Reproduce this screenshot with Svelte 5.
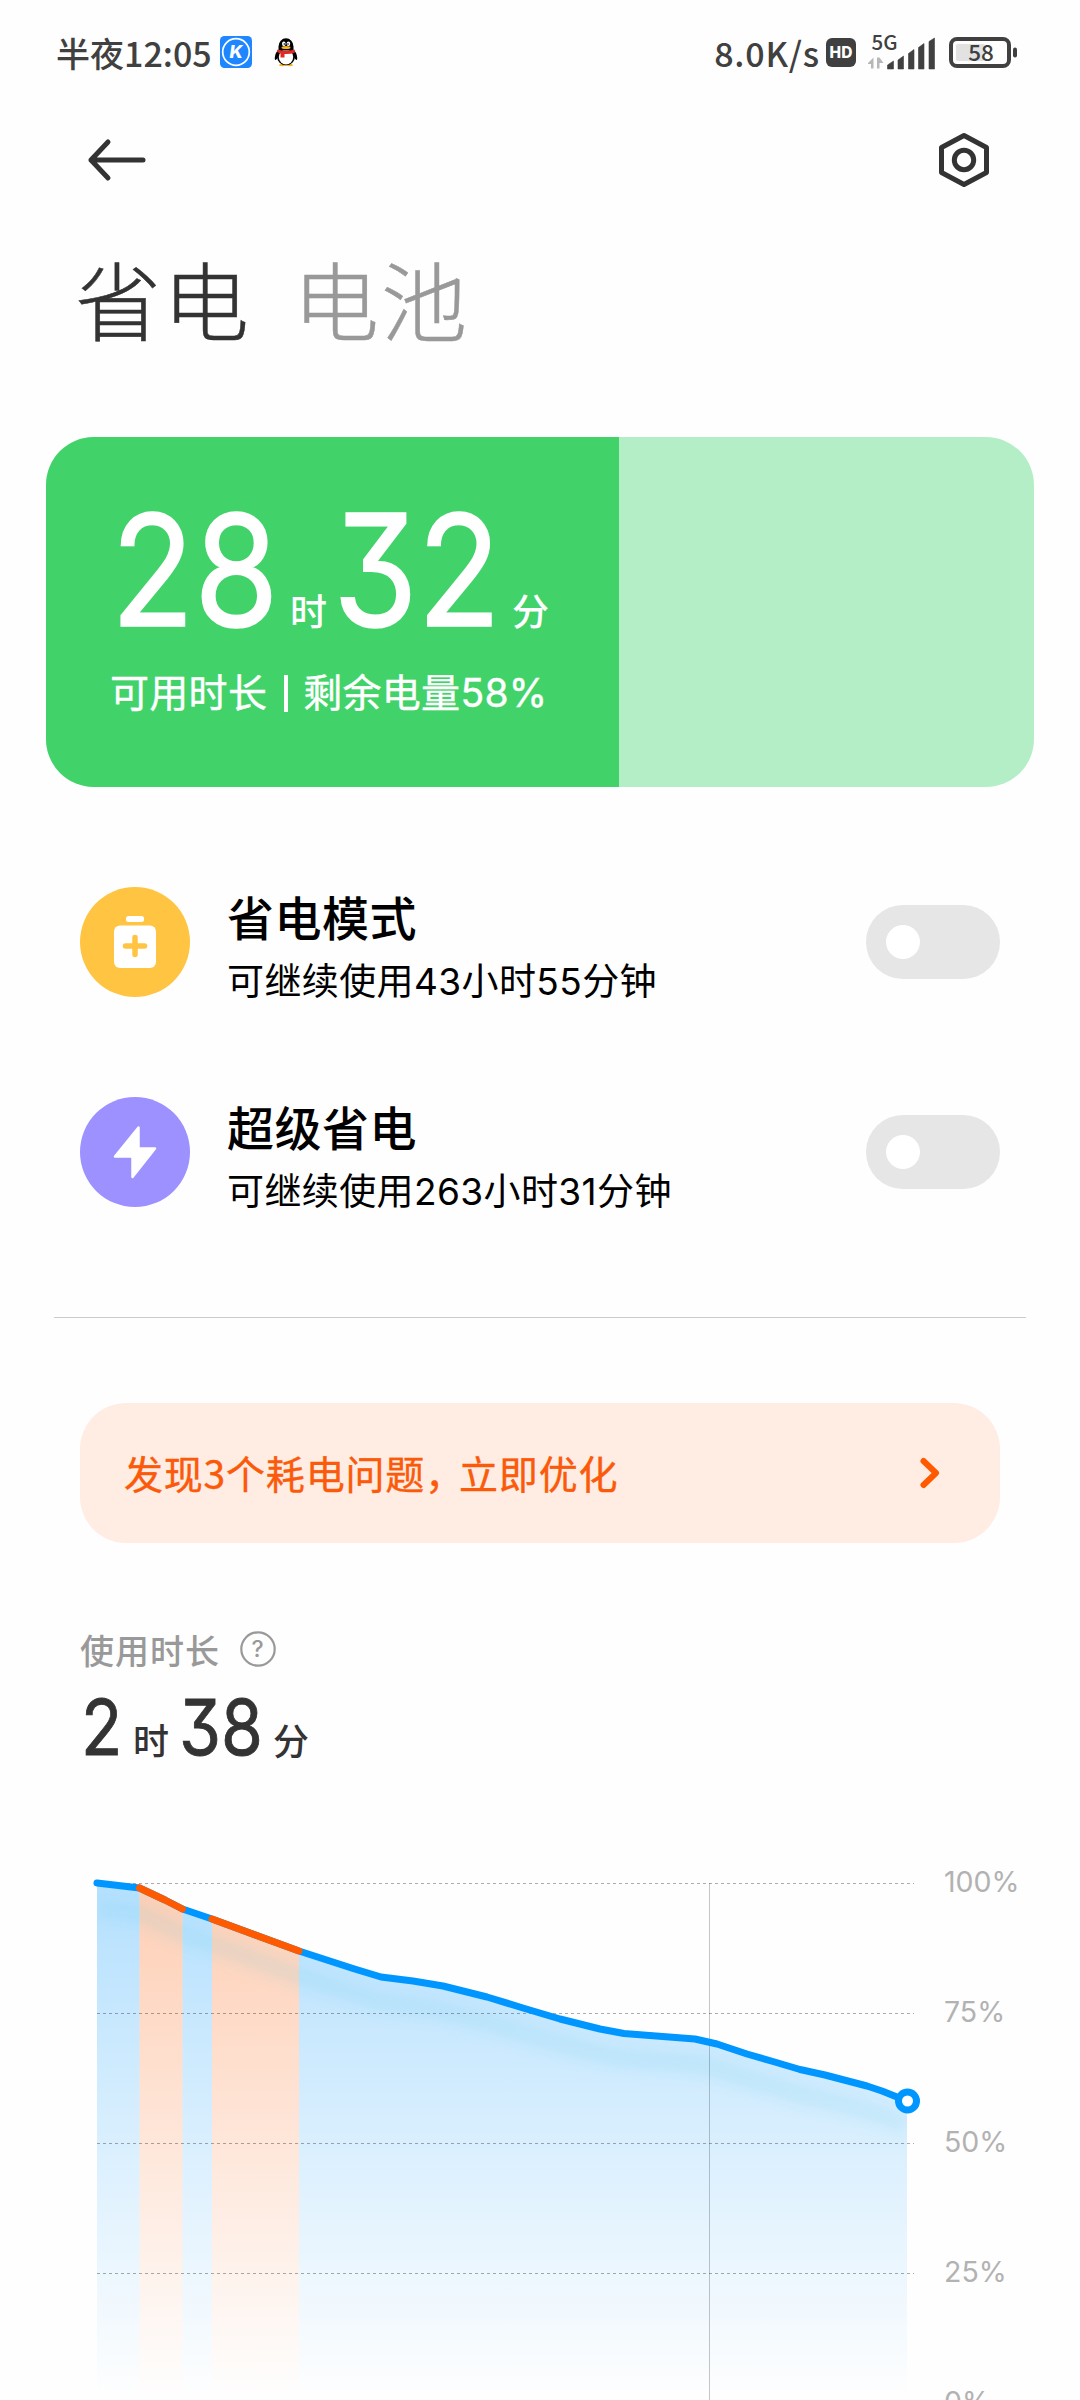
<script>
    const modes = [
        { id: 'saver', title: '省电模式', note: '可继续使用43小时55分钟', on: false },
        { id: 'ultra', title: '超级省电', note: '可继续使用263小时31分钟', on: false },
    ];

    const level = 58;

    // Battery history, in chart pixels
    const points = [
        [97, 33], [139.5, 38], [165, 50], [182.5, 59], [212, 69], [299, 101],
        [353, 118.5], [381, 127], [413, 131], [443, 136], [487, 147], [523, 158],
        [560, 169], [600, 179], [624, 183.5], [695, 189], [717, 194], [747, 204],
        [773, 211.5], [800, 219.5], [825, 225], [867, 236], [882, 241], [907, 251],
    ];
    const toLine = (list) => list.map((p) => p.join(',')).join(' ');
    const toArea = (list) => `${list[0][0]},550 ${toLine(list)} ${list[list.length - 1][0]},550`;
    const line = toLine(points);
    const heavy = [points.slice(1, 4), points.slice(4, 6)];
    const normal = [points.slice(0, 2), points.slice(3, 5), points.slice(5)];
    const scale = [100, 75, 50, 25, 0];
</script>

<div class="screen">
    <header class="status">
        <span class="clock">半夜12:05</span>
        <svg class="app-k" width="32" height="32" viewBox="0 0 32 32">
            <rect width="32" height="32" rx="4.5" fill="#1e86ff" />
            <circle cx="16" cy="16" r="13.3" fill="none" stroke="#fff" stroke-width="1.7" />
            <text class="latin" x="18.500" y="22.500" transform="skewX(-8)" text-anchor="middle" font-size="18" font-weight="800" fill="#fff">K</text>
        </svg>
        <svg class="app-qq" width="24" height="30" viewBox="0 0 24 30">
            <path d="M5 28.5Q5 26 12 26T19 28.5Q16 30 12 28.5Q8 30 5 28.5Z" fill="#f5b31c" />
            <path d="M4 13Q0 18 1 23Q3 23 4.5 19ZM20 13Q24 18 23 23Q21 23 19.5 19Z" fill="#000" />
            <ellipse cx="12" cy="19.5" rx="9" ry="8.700" fill="#000" />
            <ellipse cx="12" cy="20" rx="7.200" ry="7.500" fill="#fff" />
            <path d="M4.500 13.500V9.500A7.500 8.200 0 0 1 19.500 9.500V13.500Z" fill="#000" />
            <ellipse cx="9.800" cy="6.800" rx="1.800" ry="2.400" fill="#fff" />
            <ellipse cx="14.400" cy="6.800" rx="1.800" ry="2.400" fill="#fff" />
            <circle cx="10.300" cy="7" r=".8" />
            <circle cx="14" cy="7" r=".8" />
            <ellipse cx="12" cy="10.500" rx="4.500" ry="1.500" fill="#f5b31c" />
            <path d="M3.500 12.500Q12 15 20.500 12.500L21 15.500Q16 17.500 10.500 17V20.500H6.500V16.500L3 15Z" fill="#e12a25" />
        </svg>
        <span class="speed">8.0K/s</span>
        <svg class="hd" width="30" height="29" viewBox="0 0 30 29">
            <rect width="30" height="29" rx="6" fill="#404040" />
            <text class="latin" x="15" y="20" text-anchor="middle" font-size="15.500" font-weight="800" fill="#fff">HD</text>
        </svg>
        <svg class="signal" width="68" height="36" viewBox="0 0 68 36">
            <text x="3.500" y="15.500" font-size="20.500" fill="#404040">5G</text>
            <path d="M0 29L5.500 23.500V34.500H3V30H0ZM9 23.500V34.500H11.500V29H15.500L11.500 23.500Z" fill="#b8b8b8" />
            <path d="M19.500 35V31L25.500 27V35ZM30 35V26L35.500 22V35ZM40.500 35V19.500L46 15.500V35ZM50.500 35V13.500L56 9.500V35ZM61 35V7.500L66.500 4V35Z" fill="#404040" stroke="#404040" stroke-width=".6" stroke-linejoin="round" />
        </svg>
        <svg class="battery" width="68" height="31" viewBox="0 0 68 31">
            <rect x="2" y="2" width="58" height="27" rx="6" fill="none" stroke="#404040" stroke-width="4" />
            <rect x="7" y="7" width="29" height="17" rx="2" fill="#e2e2e2" />
            <rect x="64" y="10.500" width="4" height="10" rx="2" fill="#404040" />
            <text x="32" y="23.500" text-anchor="middle" font-size="22.500" fill="#404040">{level}</text>
        </svg>
    </header>

    <nav class="toolbar">
        <svg width="60" height="42" viewBox="0 0 60 42">
            <path d="M21 3L4 21L21 39M4 21H56" fill="none" stroke="#333" stroke-width="5" stroke-linecap="round" stroke-linejoin="round" />
        </svg>
        <svg width="50" height="56" viewBox="0 0 50 56">
            <path d="M25 3.500L47.500 15.500V40.500L25 52.500L2.500 40.500V15.500Z" fill="none" stroke="#333" stroke-width="5" stroke-linejoin="round" />
            <circle cx="25" cy="28" r="9.700" fill="none" stroke="#333" stroke-width="5" />
        </svg>
    </nav>

    <div class="tabs">
        <span class="tab active">省电</span>
        <span class="tab">电池</span>
    </div>

    <section class="card">
        <div class="card-level" style="width: {level}%"></div>
        <div class="card-body">
            <div class="time big">
                <span class="digits">28</span>
                <span class="unit">时</span>
                <span class="digits">32</span>
                <span class="unit">分</span>
            </div>
            <p>可用时长<i></i>剩余电量{level}%</p>
        </div>
    </section>

    <ul class="modes">
        {#each modes as mode (mode.id)}
        <li class="mode">
            {#if mode.id === 'saver'}
            <svg width="110" height="110" viewBox="0 0 110 110">
                <circle cx="55" cy="55" r="55" fill="#ffc542" />
                <rect x="46" y="29" width="18" height="6" rx="2.500" fill="#fff" />
                <rect x="34" y="38.500" width="42" height="42.500" rx="6" fill="#fff" />
                <path d="M55 50.500V67.500M45.500 59H64.500" stroke="#ffc542" stroke-width="5.500" stroke-linecap="round" />
            </svg>
            {:else}
            <svg width="110" height="110" viewBox="0 0 110 110">
                <circle cx="55" cy="55" r="55" fill="#9d91ff" />
                <path d="M58.500 30.500V51.500H75L52.500 80V59.500H35Z" fill="#fff" stroke="#fff" stroke-width="2.500" stroke-linejoin="round" />
            </svg>
            {/if}
            <div class="mode-text">
                <h3>{mode.title}</h3>
                <p>{mode.note}</p>
            </div>
            <span class="switch" class:on={mode.on}></span>
        </li>
        {/each}
    </ul>

    <hr />

    <section class="notice">
        <span>发现3个耗电问题<span class="comma">，</span>立即优化</span>
        <svg width="20" height="32" viewBox="0 0 20 32">
            <path d="M3.500 5L16 17L3.500 29" fill="none" stroke="#ff5a00" stroke-width="6" stroke-linecap="round" stroke-linejoin="round" />
        </svg>
    </section>

    <section class="usage">
        <div class="usage-label">
            <span>使用时长</span>
            <svg width="36" height="36" viewBox="0 0 36 36">
                <circle cx="18" cy="18" r="16.700" fill="none" stroke="#999" stroke-width="2.200" />
                <text class="latin" x="18" y="26" text-anchor="middle" font-size="23" fill="#999">?</text>
            </svg>
        </div>
        <div class="time small">
            <span class="digits">2</span>
            <span class="unit">时</span>
            <span class="digits">38</span>
            <span class="unit">分</span>
        </div>
    </section>

    <svg class="chart" width="1080" height="550" viewBox="0 0 1080 550">
        <defs>
            <linearGradient id="blue" gradientUnits="userSpaceOnUse" x1="0" y1="33" x2="0" y2="548">
                <stop offset="0" stop-color="#0096ff" stop-opacity=".29" />
                <stop offset="1" stop-color="#0096ff" stop-opacity="0" />
            </linearGradient>
            <linearGradient id="orange" gradientUnits="userSpaceOnUse" x1="0" y1="33" x2="0" y2="548">
                <stop offset="0" stop-color="#ff5a00" stop-opacity=".29" />
                <stop offset="1" stop-color="#ff5a00" stop-opacity="0" />
            </linearGradient>
            <filter id="soft" x="-5%" y="-20%" width="110%" height="140%">
                <feGaussianBlur stdDeviation="7" />
            </filter>
            <clipPath id="under">
                <polygon points={toArea(points)} />
            </clipPath>
        </defs>

        {#each normal as part}
        <polygon points={toArea(part)} fill="url(#blue)" />
        {/each}
        {#each heavy as part}
        <polygon points={toArea(part)} fill="url(#orange)" />
        {/each}
        <g clip-path="url(#under)">
            <polyline points={line} transform="translate(0 25)" fill="none" stroke="#50bede" stroke-opacity=".13" stroke-width="18" filter="url(#soft)" />
        </g>

        {#each scale as value, i}
        <path d="M97 {33.5 + i * 130}H914" stroke="#000" stroke-opacity=".32" stroke-dasharray="3 3" />
        <text class="tick" x="944" y={41.5 + i * 130}>{value}%</text>
        {/each}
        <path d="M709.5 33V550" stroke="#000" stroke-opacity=".22" />

        <polyline points={line} fill="none" stroke="#0096ff" stroke-width="7" stroke-linecap="round" stroke-linejoin="round" />
        {#each heavy as part}
        <polyline points={toLine(part)} fill="none" stroke="#ff5a00" stroke-width="7" stroke-linecap="round" stroke-linejoin="round" />
        {/each}
        <circle cx="907.500" cy="251" r="9" fill="#fff" stroke="#0096ff" stroke-width="7" />
    </svg>
</div>

<style>
    :global(body) {
        background: #fefefe;
    }

    .screen {
        width: 1080px;
        height: 2400px;
        overflow: hidden;
        background: #fefefe;
        color: #000;
        font-family: "Noto Sans CJK SC", sans-serif;
    }

    svg {
        display: block;
        flex: none;
        overflow: visible;
    }

    h3, p, ul {
        margin: 0;
        padding: 0;
        font-weight: 400;
    }

    .latin {
        font-family: Inter, sans-serif;
    }

    .status {
        display: flex;
        align-items: center;
        height: 104px;
        padding: 0 63px 0 56px;
        box-sizing: border-box;
        color: #404040;
        font-size: 34px;
        font-weight: 500;
    }

    .status svg text {
        font-weight: 500;
    }

    .status svg .latin {
        font-weight: 800;
    }

    .clock {
        width: 164px;
        white-space: nowrap;
    }

    .app-qq {
        margin-left: 22px;
    }

    .speed {
        margin-left: auto;
        margin-right: 6px;
        letter-spacing: 0.8px;
    }

    .signal {
        margin: 0 13px 0 12px;
    }

    .toolbar {
        display: flex;
        align-items: center;
        justify-content: space-between;
        height: 112px;
        padding: 0 91px 0 87px;
    }

    .tabs {
        display: flex;
        gap: 42px;
        height: 221px;
        padding: 22px 0 0 75px;
        box-sizing: border-box;
        font-size: 86px;
        font-weight: 300;
        line-height: 120px;
        letter-spacing: 2px;
        -webkit-text-stroke: 0.5px;
    }

    .tab {
        color: #999;
    }

    .tab.active {
        color: #333;
    }

    .card {
        position: relative;
        width: 988px;
        height: 350px;
        margin-left: 46px;
        border-radius: 48px;
        overflow: hidden;
        background: #b3eec6;
    }

    .card-level {
        height: 100%;
        background: #41d36a;
    }

    .card-body {
        position: absolute;
        inset: 0;
        padding: 73px 64px;
        color: #fff;
    }

    .card-body p {
        display: flex;
        align-items: center;
        margin-top: 33px;
        font-family: Inter, "Noto Sans CJK SC", sans-serif;
        font-size: 39px;
        line-height: 60px;
        letter-spacing: 0.3px;
        -webkit-text-stroke: 0.4px;
    }

    .card-body i {
        width: 4px;
        height: 37px;
        margin: 0 15px 0 17px;
        background: #fff;
    }

    .time {
        display: flex;
        align-items: baseline;
        white-space: nowrap;
    }

    /* Inter is wider than the display face, so the numerals are condensed */
    .digits {
        font-family: Inter, sans-serif;
        font-feature-settings: "cv09";
        font-weight: 400;
        transform: scaleX(0.88);
        transform-origin: left;
        -webkit-text-stroke: 0.011em;
    }

    .unit {
        font-weight: 500;
        line-height: 1;
    }

    .big {
        height: 120px;
        padding-left: 1px;
    }

    .big .digits {
        width: 167px;
        font-size: 155px;
        line-height: 120px;
    }

    .big .unit {
        width: 37px;
        margin: 0 6px 0 12px;
        font-size: 37px;
    }

    .small {
        height: 60px;
        margin-top: 23px;
        padding-left: 1px;
        color: #333;
    }

    .small .digits {
        width: 84px;
        font-size: 77px;
        line-height: 60px;
    }

    .small .digits:first-child {
        width: 42px;
    }

    .small .unit {
        width: 36px;
        margin: 0 10px;
        font-size: 36px;
    }

    .modes {
        list-style: none;
        padding: 50px 80px 0;
    }

    .mode {
        display: flex;
        align-items: center;
        height: 210px;
    }

    .mode-text {
        flex: 1;
        margin-left: 37px;
        padding-top: 13px;
    }

    .mode h3 {
        font-size: 47px;
        font-weight: 500;
        line-height: 66px;
        letter-spacing: 0.5px;
    }

    .mode p {
        font-family: Inter, "Noto Sans CJK SC", sans-serif;
        font-size: 37px;
        line-height: 66px;
        letter-spacing: 0.4px;
    }

    .switch {
        width: 134px;
        height: 74px;
        border-radius: 37px;
        box-sizing: border-box;
        padding: 20px;
        background: #e6e6e6;
    }

    .switch::before {
        content: "";
        display: block;
        width: 34px;
        height: 34px;
        border-radius: 50%;
        background: #fff;
    }

    .switch.on {
        background: #0096ff;
    }

    hr {
        height: 1px;
        margin: 60px 54px 85px;
        border: none;
        background: #ccc;
    }

    .notice {
        display: flex;
        align-items: center;
        justify-content: space-between;
        height: 140px;
        margin: 0 80px;
        padding: 0 60px 2px 44px;
        box-sizing: border-box;
        border-radius: 46px;
        background: #ffede4;
        color: #fa5a0a;
        font-size: 39px;
        letter-spacing: 0.8px;
        -webkit-text-stroke: 0.4px;
    }

    .comma {
        letter-spacing: -5px;
    }

    .usage {
        padding: 81px 80px 0;
    }

    .usage-label {
        display: flex;
        align-items: center;
        gap: 20px;
        height: 50px;
        color: #999;
        font-size: 34px;
        font-weight: 500;
        letter-spacing: 1px;
    }

    .chart {
        margin-top: 93px;
    }

    .tick {
        fill: #b2b2b2;
        font-family: Inter, sans-serif;
        font-size: 28.5px;
    }
</style>
